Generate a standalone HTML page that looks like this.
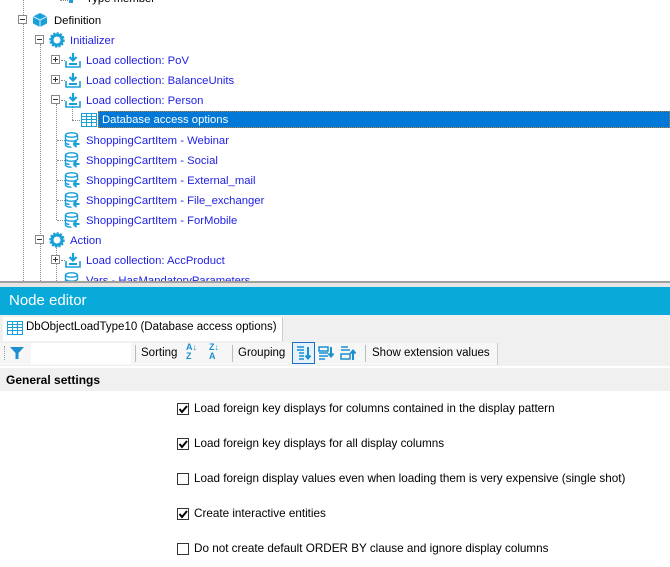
<!DOCTYPE html>
<html><head><meta charset="utf-8"><style>
*{margin:0;padding:0;box-sizing:border-box}
body{width:670px;height:567px;overflow:hidden;background:#fff;font-family:"Liberation Sans",sans-serif;font-size:11.3px;position:relative}
.a{position:absolute}
.t{position:absolute;color:#1e1ee6;white-space:nowrap;line-height:14px;margin-top:1px}
.vl{position:absolute;width:0;border-left:1px dotted #888}
.hl{position:absolute;height:0;border-top:1px dotted #888}
.ex{position:absolute;width:9px;height:9px;border:1px solid #888;background:#fff}
.ex:before{content:"";position:absolute;left:1px;top:3px;width:5px;height:1px;background:#333}
.ex.p:after{content:"";position:absolute;left:3px;top:1px;width:1px;height:5px;background:#333}
.cb{position:absolute;left:177px;width:12px;height:12px;border:1px solid #333;background:#fff}
.lb{position:absolute;left:194px;color:#000;white-space:nowrap;font-size:11.7px}
.tb12{font-size:11.5px}
</style></head><body>
<svg width="0" height="0" style="position:absolute">
<defs>
<symbol id="dl" viewBox="0 0 16 16"><path d="M8 1v7M4.5 5l3.5 3.5L11.5 5" stroke="#1aa0d8" stroke-width="2.2" fill="none"/><path d="M1 9v6h14V9" stroke="#1aa0d8" stroke-width="1.6" fill="none"/><rect x="4" y="11" width="8" height="2" fill="#1aa0d8"/></symbol>
<symbol id="db" viewBox="0 0 16 16"><ellipse cx="7" cy="3" rx="6" ry="2.2" fill="none" stroke="#1aa0d8" stroke-width="1.4"/><path d="M1 3v10c0 1.2 2.7 2.2 6 2.2M13 3v5M1 7c0 1.2 2.7 2.2 6 2.2s6-1 6-2.2M1 10.5c0 1 2 1.8 4 2" fill="none" stroke="#1aa0d8" stroke-width="1.4"/><path d="M9 12h6M9 12l3-3M9 12l3 3" stroke="#1aa0d8" stroke-width="2" fill="none"/></symbol>
<symbol id="gr" viewBox="0 0 16 16"><circle cx="8" cy="8" r="5" fill="none" stroke="#1aa0d8" stroke-width="3"/><circle cx="8" cy="8" r="7" fill="none" stroke="#1aa0d8" stroke-width="1.5" stroke-dasharray="2.2 1.4"/></symbol>
<symbol id="tb" viewBox="0 0 16 16"><rect x="0.5" y="1.5" width="15" height="13" fill="#fff" stroke="#1aa0d8"/><path d="M0.5 4.5h15M0.5 7.5h15M0.5 10.5h15M5.5 1.5v13M10.5 1.5v13" stroke="#1aa0d8"/></symbol>
</defs></svg>

<div class="vl" style="left:23px;top:0;height:281px"></div>
<div class="vl" style="left:40px;top:44px;height:196px"></div>
<div class="vl" style="left:56px;top:104px;height:116px"></div>
<div class="vl" style="left:40px;top:244px;height:37px"></div>
<div class="vl" style="left:72px;top:106px;height:14px"></div>
<div class="vl" style="left:56px;top:244px;height:37px"></div>
<div class="hl" style="left:60px;top:0;width:8px"></div>
<svg class="a" style="left:66px;top:-6px" width="10" height="10"><rect x="3" y="0" width="4" height="9" fill="#1aa0d8"/></svg>
<div class="t" style="left:86px;top:-9px;color:#000">Type member</div>

<div class="ex" style="left:18px;top:15px"></div>
<svg class="a" style="left:32px;top:12px" width="16" height="16" viewBox="0 0 16 16"><path d="M8 1l7 3.5v7L8 15 1 11.5v-7z" fill="#1aa0d8"/><path d="M1 4.5L8 8l7-3.5M8 8v7" stroke="#fff" stroke-width="0.8" fill="none"/></svg>
<div class="t" style="left:54px;top:13px;color:#000">Definition</div>

<div class="ex" style="left:35px;top:35px"></div>
<svg class="a" style="left:49px;top:32px" width="16" height="16"><use href="#gr"/></svg>
<div class="t" style="left:70px;top:33px">Initializer</div>

<div class="ex p" style="left:51px;top:55px"></div><div class="hl" style="left:61px;top:60px;width:4px"></div>
<svg class="a" style="left:65px;top:52px" width="16" height="16"><use href="#dl"/></svg>
<div class="t" style="left:86px;top:53px">Load collection: PoV</div>

<div class="ex p" style="left:51px;top:75px"></div><div class="hl" style="left:61px;top:80px;width:4px"></div>
<svg class="a" style="left:65px;top:72px" width="16" height="16"><use href="#dl"/></svg>
<div class="t" style="left:86px;top:73px">Load collection: BalanceUnits</div>

<div class="ex" style="left:51px;top:95px"></div><div class="hl" style="left:61px;top:100px;width:4px"></div>
<svg class="a" style="left:65px;top:92px" width="16" height="16"><use href="#dl"/></svg>
<div class="t" style="left:86px;top:93px">Load collection: Person</div>

<div class="hl" style="left:72px;top:120px;width:8px"></div>
<svg class="a" style="left:81px;top:112px" width="16" height="16"><use href="#tb"/></svg>
<div class="a" style="left:98px;top:111px;width:572px;height:17px;background:#0078d7;border:1px dotted #c08030"></div>
<div class="t" style="left:102px;top:112px;color:#fff">Database access options</div>

<div class="hl" style="left:57px;top:140px;width:8px"></div>
<svg class="a" style="left:64px;top:132px" width="17" height="16"><use href="#db"/></svg>
<div class="t" style="left:86px;top:133px">ShoppingCartItem - Webinar</div>
<div class="hl" style="left:57px;top:160px;width:8px"></div>
<svg class="a" style="left:64px;top:152px" width="17" height="16"><use href="#db"/></svg>
<div class="t" style="left:86px;top:153px">ShoppingCartItem - Social</div>
<div class="hl" style="left:57px;top:180px;width:8px"></div>
<svg class="a" style="left:64px;top:172px" width="17" height="16"><use href="#db"/></svg>
<div class="t" style="left:86px;top:173px">ShoppingCartItem - External_mail</div>
<div class="hl" style="left:57px;top:200px;width:8px"></div>
<svg class="a" style="left:64px;top:192px" width="17" height="16"><use href="#db"/></svg>
<div class="t" style="left:86px;top:193px">ShoppingCartItem - File_exchanger</div>
<div class="hl" style="left:57px;top:220px;width:8px"></div>
<svg class="a" style="left:64px;top:212px" width="17" height="16"><use href="#db"/></svg>
<div class="t" style="left:86px;top:213px">ShoppingCartItem - ForMobile</div>

<div class="ex" style="left:35px;top:235px"></div>
<svg class="a" style="left:49px;top:232px" width="16" height="16"><use href="#gr"/></svg>
<div class="t" style="left:70px;top:233px">Action</div>

<div class="ex p" style="left:51px;top:255px"></div><div class="hl" style="left:61px;top:260px;width:4px"></div>
<svg class="a" style="left:65px;top:252px" width="16" height="16"><use href="#dl"/></svg>
<div class="t" style="left:86px;top:253px">Load collection: AccProduct</div>
<svg class="a" style="left:64px;top:272px" width="17" height="16"><use href="#db"/></svg>
<div class="t" style="left:86px;top:273px">Vars - HasMandatoryParameters</div>

<div class="a" style="left:0;top:281px;width:670px;height:2px;background:#a0a0a0"></div>
<div class="a" style="left:0;top:283px;width:670px;height:4px;background:#e6e6e6"></div>
<div class="a" style="left:0;top:287px;width:670px;height:28px;background:#09a9d9"></div>
<div class="a" style="left:9px;top:292px;color:#fff;font-size:15px">Node editor</div>

<div class="a" style="left:0;top:315px;width:670px;height:27px;background:#f0f0f0"></div>
<div class="a" style="left:3px;top:317px;width:280px;height:24px;background:#fff;border-right:1px solid #ccc"></div>
<svg class="a" style="left:7px;top:320px" width="16" height="16"><use href="#tb"/></svg>
<div class="a tb12" style="left:26px;top:321px;color:#000">DbObjectLoadType10 (Database access options)</div>

<div class="a" style="left:0;top:342px;width:670px;height:24px;background:#f0f0f0"></div>
<div class="a" style="left:0;top:343px;width:498px;height:22px;background:#f6f6f6"></div>
<div class="vl" style="left:4px;top:346px;height:14px;border-color:#999"></div>
<svg class="a" style="left:9px;top:346px" width="16" height="14"><path d="M1 1h14L9.5 7v6h-3V7z" fill="#1a90d0"/></svg>
<div class="a" style="left:31px;top:343px;width:100px;height:21px;background:#fff"></div>
<div class="a" style="left:135px;top:345px;width:1px;height:17px;background:#bbb"></div>
<div class="a tb12" style="left:141px;top:347px">Sorting</div>
<div class="a" style="left:186px;top:343px;font-size:9px;font-weight:bold;color:#1a90d0;line-height:9px">A↓<br>Z</div>
<div class="a" style="left:209px;top:343px;font-size:9px;font-weight:bold;color:#1a90d0;line-height:9px">Z↓<br>A</div>
<div class="a" style="left:232px;top:345px;width:1px;height:17px;background:#bbb"></div>
<div class="a tb12" style="left:238px;top:347px">Grouping</div>
<div class="a" style="left:292px;top:342px;width:23px;height:22px;border:1px solid #1a70c0;background:#e5f1fb"></div>
<svg class="a" style="left:296px;top:345px" width="16" height="16"><path d="M1 2h7M1 5h7M3 8h5M3 11h5M3 14h5" stroke="#1a90d0" stroke-width="1.5"/><path d="M12 2v11M9.5 10.5l2.5 3 2.5-3" stroke="#1a90d0" stroke-width="2" fill="none"/></svg>
<svg class="a" style="left:318px;top:345px" width="16" height="16"><path d="M1 2h9v4H1zM1 8h9M1 11h9M1 14h6" stroke="#1a90d0" stroke-width="1.5" fill="none"/><path d="M13 2v9M10.5 8.5l2.5 3 2.5-3" stroke="#1a90d0" stroke-width="2" fill="none"/></svg>
<svg class="a" style="left:340px;top:345px" width="16" height="16"><path d="M1 2h7M1 5h9M1 9h9v5H1z" stroke="#1a90d0" stroke-width="1.5" fill="none"/><path d="M13 15V6M10.5 8.5l2.5-3 2.5 3" stroke="#1a90d0" stroke-width="2" fill="none"/></svg>
<div class="a" style="left:365px;top:345px;width:1px;height:17px;background:#bbb"></div>
<div class="a tb12" style="left:372px;top:347px">Show extension values</div>
<div class="a" style="left:497px;top:343px;width:1px;height:22px;background:#ccc"></div>

<div class="a" style="left:0;top:368px;width:670px;height:23px;background:#f0f0f0"></div>
<div class="a" style="left:6px;top:373px;font-weight:bold;font-size:12px">General settings</div>

<div class="cb" style="top:403px"><svg width="10" height="10" style="position:absolute;left:0;top:0"><path d="M1.5 5l2.5 3 5-6" stroke="#000" stroke-width="2" fill="none"/></svg></div>
<div class="lb" style="top:402px">Load foreign key displays for columns contained in the display pattern</div>
<div class="cb" style="top:438px"><svg width="10" height="10" style="position:absolute;left:0;top:0"><path d="M1.5 5l2.5 3 5-6" stroke="#000" stroke-width="2" fill="none"/></svg></div>
<div class="lb" style="top:437px">Load foreign key displays for all display columns</div>
<div class="cb" style="top:473px"></div>
<div class="lb" style="top:472px">Load foreign display values even when loading them is very expensive (single shot)</div>
<div class="cb" style="top:508px"><svg width="10" height="10" style="position:absolute;left:0;top:0"><path d="M1.5 5l2.5 3 5-6" stroke="#000" stroke-width="2" fill="none"/></svg></div>
<div class="lb" style="top:507px">Create interactive entities</div>
<div class="cb" style="top:543px"></div>
<div class="lb" style="top:542px">Do not create default ORDER BY clause and ignore display columns</div>
</body></html>
